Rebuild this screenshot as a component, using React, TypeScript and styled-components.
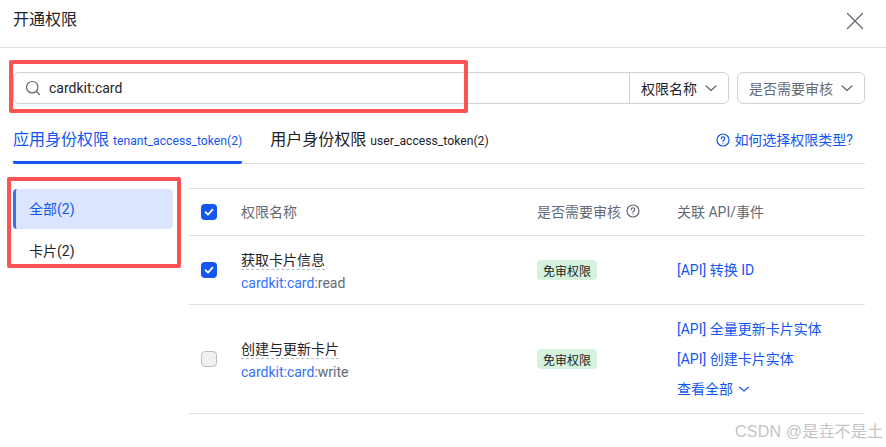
import React from "react";
import styled, { createGlobalStyle } from "styled-components";

const Global = createGlobalStyle`
  html, body { margin: 0; padding: 0; background: #fff; }
  body { font-family: Roboto, "Noto Sans CJK SC", sans-serif; color: #1f2329; overflow: hidden; }
  * { box-sizing: border-box; }
`;

const Page = styled.div`
  position: relative;
  width: 886px;
  height: 447px;
  overflow: hidden;
  background: #fff;
`;
const Header = styled.header`
  height: 48px;
  padding: 0 22px 0 13px;
  border-bottom: 1px solid #dee0e3;
  display: flex;
  align-items: center;
  justify-content: space-between;
  padding-bottom: 7px;
`;
const Title = styled.h1`
  margin: 0;
  font-size: 16px;
  line-height: 24px;
  font-weight: 400;
  color: #1f2329;
`;
const CloseBtn = styled.span`
  display: flex;
  color: #646a73;
  margin-top: 2px;
`;
const Body = styled.div`
  padding: 24px 21px 0 13px;
`;
const SearchRow = styled.div`
  display: flex;
  gap: 8px;
`;
const SearchGroup = styled.div`
  flex: 1;
  height: 32px;
  display: flex;
  border: 1px solid #d0d3d6;
  border-radius: 6px;
`;
const SearchField = styled.div`
  flex: 1;
  display: flex;
  align-items: center;
  gap: 8px;
  padding-left: 11px;
  font-size: 14px;
  color: #1f2329;
`;
const SelectInner = styled.div`
  width: 99px;
  border-left: 1px solid #d0d3d6;
  display: flex;
  align-items: center;
  justify-content: space-between;
  padding: 0 9px 0 11px;
  font-size: 14px;
  color: #1f2329;
`;
const SelectBox = styled.div`
  width: 128px;
  height: 32px;
  border: 1px solid #d0d3d6;
  border-radius: 6px;
  display: flex;
  align-items: center;
  justify-content: space-between;
  padding: 0 9px 0 11px;
  font-size: 14px;
  color: #646a73;
`;
const Tabs = styled.div`
  height: 44px;
  margin-top: 16px;
  border-bottom: 1px solid #dee0e3;
  display: flex;
  align-items: flex-start;
  justify-content: space-between;
`;
const TabList = styled.div`
  display: flex;
  gap: 28px;
`;
const Tab = styled.div<{ $active?: boolean }>`
  height: 44px;
  padding-top: 8px;
  font-size: 16px;
  line-height: 24px;
  white-space: nowrap;
  color: ${(p) => (p.$active ? "#1456f0" : "#1f2329")};
  border-bottom: ${(p) => (p.$active ? "3px solid #1456f0" : "none")};
  border-radius: 2px;
`;
const TabSub = styled.span`
  font-size: 12.2px;
  margin-left: 4px;
`;
const HelpLink = styled.a`
  margin-top: 8px;
  margin-right: 12px;
  display: flex;
  align-items: center;
  gap: 4px;
  font-size: 14px;
  line-height: 24px;
  color: #1456f0;
`;
const Main = styled.div`
  display: flex;
  gap: 16px;
  margin-top: 24px;
`;
const Side = styled.nav`
  width: 160px;
  padding-top: 1px;
`;
const SideItem = styled.div<{ $active?: boolean }>`
  height: 40px;
  margin-bottom: 2px;
  padding-bottom: 2px;
  display: flex;
  align-items: center;
  font-size: 14px;
  border-radius: 4px;
  color: ${(p) => (p.$active ? "#1456f0" : "#1f2329")};
  background: ${(p) => (p.$active ? "#dbe5fd" : "transparent")};
  border-left: ${(p) => (p.$active ? "3px solid #3370ff" : "none")};
  padding-left: ${(p) => (p.$active ? "13px" : "16px")};
`;
const Table = styled.div`
  flex: 1;
  border-top: 1px solid #dee0e3;
`;
const Row = styled.div<{ $h: number }>`
  height: ${(p) => p.$h}px;
  border-bottom: 1px solid #dee0e3;
  display: grid;
  grid-template-columns: 52px 296px 140px 1fr;
  align-items: center;
  font-size: 14px;
`;
const HeadCell = styled.div`
  display: flex;
  align-items: center;
  gap: 5px;
  color: #646a73;
  font-size: 14px;
  padding-bottom: 2px;
`;
const CheckCell = styled.div`
  padding-left: 12px;
  display: flex;
`;
const Check = styled.span<{ $on?: boolean }>`
  width: 16px;
  height: 16px;
  border-radius: 4px;
  display: flex;
  align-items: center;
  justify-content: center;
  background: ${(p) => (p.$on ? "#1456f0" : "#eff0f1")};
  border: ${(p) => (p.$on ? "none" : "1px solid #bbbfc4")};
`;
const NameCell = styled.div`
  display: flex;
  flex-direction: column;
  align-items: flex-start;
  gap: 3px;
  padding-top: 4px;
`;
const Name = styled.span`
  font-size: 14px;
  line-height: 18px;
  color: #1f2329;
  border-bottom: 1px dashed #bbbfc4;
  height: 19px;
`;
const Scope = styled.span`
  font-size: 14px;
  line-height: 21px;
  color: #646a73;
`;
const ScopeMark = styled.span`
  color: #3370ff;
`;
const Badge = styled.span`
  display: inline-flex;
  align-items: center;
  height: 20px;
  padding: 0 6px;
  border-radius: 4px;
  background: #d5f3dc;
  font-size: 12px;
  color: #1f2329;
`;
const BadgeCell = styled.div`
  display: flex;
`;
const ApiCell = styled.div`
  display: flex;
  flex-direction: column;
  gap: 10px;
`;
const ApiLink = styled.a`
  display: flex;
  align-items: center;
  gap: 4px;
  font-size: 14px;
  line-height: 20px;
  color: #1456f0;
`;
const Watermark = styled.div`
  position: absolute;
  left: 735px;
  top: 422px;
  font-family: "Liberation Sans", "Noto Sans CJK SC", sans-serif;
  font-size: 16px;
  line-height: 20px;
  white-space: nowrap;
  color: #c4c4c4;
  letter-spacing: 0.2px;
`;
const RedBox = styled.div<{ $l: number; $t: number; $w: number; $h: number }>`
  position: absolute;
  left: ${(p) => p.$l}px;
  top: ${(p) => p.$t}px;
  width: ${(p) => p.$w}px;
  height: ${(p) => p.$h}px;
  border: 4px solid #fc5454;
  border-radius: 2px;
`;

const Chevron = ({ size = 16, color = "#646a73" }: { size?: number; color?: string }) => (
  <svg width={size} height={size} viewBox="0 0 16 16" fill="none">
    <path d="M3 6l5 4.500L13 6" stroke={color} strokeWidth="1.300" strokeLinecap="round" strokeLinejoin="round" />
  </svg>
);
const Question = ({ color }: { color: string }) => (
  <svg width="14" height="14" viewBox="0 0 14 14" fill="none">
    <circle cx="7" cy="7" r="6" stroke={color} strokeWidth="1.200" />
    <path d="M5.300 5.600a1.700 1.700 0 1 1 2.600 1.400c-.6.400-.9.700-.9 1.300" stroke={color} strokeWidth="1.200" strokeLinecap="round" />
    <circle cx="7" cy="10.100" r=".7" fill={color} />
  </svg>
);
const Tick = () => (
  <svg width="10" height="10" viewBox="0 0 10 10" fill="none">
    <path d="M1.500 5.200l2.500 2.400 4.500-5" stroke="#fff" strokeWidth="1.800" strokeLinecap="round" strokeLinejoin="round" />
  </svg>
);

export default function App() {
  return (
    <Page>
      <Global />
      <Header>
        <Title>开通权限</Title>
        <CloseBtn>
          <svg width="18" height="18" viewBox="0 0 18 18" fill="none">
            <path d="M1.500 1.500l15 15M16.500 1.500l-15 15" stroke="currentColor" strokeWidth="1.400" strokeLinecap="round" />
          </svg>
        </CloseBtn>
      </Header>
      <Body>
        <SearchRow>
          <SearchGroup>
            <SearchField>
              <svg width="16" height="16" viewBox="0 0 16 16" fill="none">
                <circle cx="7.200" cy="7.200" r="5.700" stroke="#646a73" strokeWidth="1.200" />
                <path d="M11.500 11.500l3 3" stroke="#646a73" strokeWidth="1.200" strokeLinecap="round" />
              </svg>
              cardkit:card
            </SearchField>
            <SelectInner>
              权限名称
              <Chevron />
            </SelectInner>
          </SearchGroup>
          <SelectBox>
            是否需要审核
            <Chevron />
          </SelectBox>
        </SearchRow>
        <Tabs>
          <TabList>
            <Tab $active>
              应用身份权限<TabSub>tenant_access_token(2)</TabSub>
            </Tab>
            <Tab>
              用户身份权限<TabSub>user_access_token(2)</TabSub>
            </Tab>
          </TabList>
          <HelpLink>
            <Question color="#1456f0" />
            如何选择权限类型?
          </HelpLink>
        </Tabs>
        <Main>
          <Side>
            <SideItem $active>全部(2)</SideItem>
            <SideItem>卡片(2)</SideItem>
          </Side>
          <Table>
            <Row $h={47}>
              <CheckCell>
                <Check $on>
                  <Tick />
                </Check>
              </CheckCell>
              <HeadCell>权限名称</HeadCell>
              <HeadCell>
                是否需要审核
                <Question color="#646a73" />
              </HeadCell>
              <HeadCell>关联 API/事件</HeadCell>
            </Row>
            <Row $h={69}>
              <CheckCell>
                <Check $on>
                  <Tick />
                </Check>
              </CheckCell>
              <NameCell>
                <Name>获取卡片信息</Name>
                <Scope>
                  <ScopeMark>cardkit:card</ScopeMark>:read
                </Scope>
              </NameCell>
              <BadgeCell>
                <Badge>免审权限</Badge>
              </BadgeCell>
              <ApiCell>
                <ApiLink>[API] 转换 ID</ApiLink>
              </ApiCell>
            </Row>
            <Row $h={109}>
              <CheckCell>
                <Check />
              </CheckCell>
              <NameCell>
                <Name>创建与更新卡片</Name>
                <Scope>
                  <ScopeMark>cardkit:card</ScopeMark>:write
                </Scope>
              </NameCell>
              <BadgeCell>
                <Badge>免审权限</Badge>
              </BadgeCell>
              <ApiCell>
                <ApiLink>[API] 全量更新卡片实体</ApiLink>
                <ApiLink>[API] 创建卡片实体</ApiLink>
                <ApiLink>
                  查看全部
                  <Chevron size={14} color="#1456f0" />
                </ApiLink>
              </ApiCell>
            </Row>
          </Table>
        </Main>
      </Body>
      <RedBox $l={9} $t={60} $w={459} $h={53} />
      <RedBox $l={7} $t={177} $w={174} $h={91} />
      <Watermark>CSDN @是垚不是土</Watermark>
    </Page>
  );
}
